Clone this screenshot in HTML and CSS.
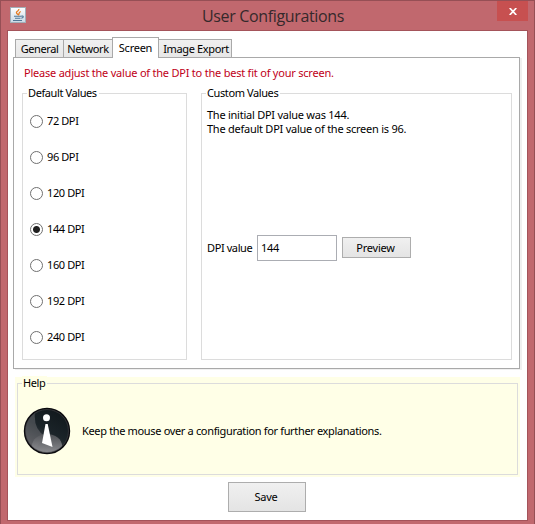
FILE: index.html
```html
<!DOCTYPE html>
<html lang="en">
<head>
<meta charset="utf-8">
<title>User Configurations</title>
<link rel="stylesheet" href="styles.css">
</head>
<body>
<div class="window">
  <header class="titlebar">
    <svg class="app-icon" width="16" height="16" viewBox="0 0 16 16">
      <defs><linearGradient id="tile" x2="0" y2="1"><stop stop-color="#fff"/><stop offset="1" stop-color="#c9d9e5"/></linearGradient></defs>
      <rect x=".5" y=".5" width="15" height="15" fill="url(#tile)" stroke="#a2afb8"/>
      <path d="M8.5 8C5.5 6 6 5 8 3.700Q9 3 8.800 2M8.500 8.200C9.500 7 8 6 10.700 4.500" fill="none" stroke="#e57b20" stroke-width="1.300"/>
      <path d="M4 9.300h7M5 11.300h5.500M3 13.500h9M11 9.200c3-.8 3 1.500.3 2.100" fill="none" stroke="#517897" stroke-width="1.100"/>
    </svg>
    <h1 class="title">User Configurations</h1>
    <button class="close" aria-label="Close"><svg width="8" height="7" viewBox="0 0 8 7"><path d="M.7 0 7.300 7M7.300 0 .7 7" stroke="#fff" stroke-width="1.700"/></svg></button>
  </header>
  <main class="content">
    <nav class="tabs">
      <span class="tab general">General</span><span class="tab network">Network</span><span class="tab active">Screen</span><span class="tab export">Image Export</span>
    </nav>
    <section class="panel">
      <p class="notice">Please adjust the value of the DPI to the best fit of your screen.</p>
      <div class="groups">
        <div class="group defaults">
          <span class="legend">Default Values</span>
          <div class="option"><i class="radio"></i><span>72 DPI</span></div>
          <div class="option"><i class="radio"></i><span>96 DPI</span></div>
          <div class="option"><i class="radio"></i><span>120 DPI</span></div>
          <div class="option"><i class="radio checked"></i><span>144 DPI</span></div>
          <div class="option"><i class="radio"></i><span>160 DPI</span></div>
          <div class="option"><i class="radio"></i><span>192 DPI</span></div>
          <div class="option"><i class="radio"></i><span>240 DPI</span></div>
        </div>
        <div class="group custom">
          <span class="legend">Custom Values</span>
          <p class="info">The initial DPI value was 144.<br>The default DPI value of the screen is 96.</p>
          <div class="field"><span class="field-label">DPI value</span><span class="input">144</span><span class="button preview">Preview</span></div>
        </div>
      </div>
    </section>
    <section class="help">
      <div class="group help-box">
        <span class="legend">Help</span>
        <svg width="48" height="48" viewBox="0 0 48 48">
          <defs>
            <linearGradient id="ball" x1=".8" x2=".25" y1="0" y2="1"><stop stop-color="#10171b"/><stop offset=".5" stop-color="#1b2429"/><stop offset="1" stop-color="#56565a"/></linearGradient>
            <linearGradient id="glow" x2="0" y2="1"><stop stop-color="#55575b"/><stop offset="1" stop-color="#aaaaae"/></linearGradient>
            <clipPath id="disc"><circle cx="24" cy="24" r="21.500"/></clipPath>
          </defs>
          <circle cx="24" cy="24" r="22.300" fill="url(#ball)" stroke="#0b0b0f" stroke-width="1.800"/>
          <g clip-path="url(#disc)">
            <path d="M12 4Q10 22 22 29L10 44 0 34V12Z" fill="#77777c" opacity=".45"/>
            <ellipse cx="24" cy="39" rx="15" ry="12" fill="url(#glow)" opacity=".85"/>
          </g>
          <circle cx="24" cy="24" r="21.500" fill="none" stroke="#4b4b50" stroke-width=".8" opacity=".7"/>
          <circle cx="23.500" cy="10.700" r="3.500" fill="#fff"/>
          <path d="M22.500 17h2.200L29.500 40 19 36Z" fill="#fff"/>
        </svg>
        <span class="help-text">Keep the mouse over a configuration for further explanations.</span>
      </div>
    </section>
    <div class="button save">Save</div>
  </main>
</div>
</body>
</html>
```
FILE: styles.css
```css
* { box-sizing: border-box; }
body {
  margin: 0;
  font: 11px/14px "Noto Sans", "Open Sans", sans-serif;
  letter-spacing: -0.25px;
  color: #000;
}
p, h1 { margin: 0; }
.window {
  width: 535px;
  height: 524px;
  padding: 0 6px;
  background: #c1686e;
  border: 1px solid #964f55;
  border-bottom: 0;
}
.titlebar {
  height: 29px;
  display: flex;
  align-items: flex-start;
}
.app-icon { margin: 6px 0 0 3px; }
.title {
  margin: 4px 0 0 176px;
  width: 150px;
  font: 16px/22px "Open Sans", sans-serif;
  letter-spacing: -0.35px;
  color: #35282b;
  white-space: nowrap;
}
.close {
  width: 31px;
  height: 20px;
  margin-left: auto;
  padding: 0;
  border: 0;
  background: #c75050;
  display: flex;
  align-items: center;
  justify-content: center;
}
.content {
  height: 491px;
  padding: 6px 5px 0;
  background: #fff;
  border: 1px solid #a4535a;
}
.tabs {
  display: flex;
  align-items: flex-end;
  height: 20px;
  padding-left: 2px;
}
.tab {
  height: 18px;
  border: 1px solid #a9a9a9;
  border-bottom: 0;
  background: linear-gradient(#f0f0f0, #e7e7e7);
  line-height: 18px;
  text-align: center;
  white-space: nowrap;
}
.general { width: 48px; border-right: 0; letter-spacing: -0.4px; }
.network { width: 49px; border-right: 0; letter-spacing: -0.4px; }
.active {
  position: relative;
  width: 47px;
  height: 21px;
  margin-bottom: -1px;
  background: #fff;
  line-height: 19px;
}
.export { width: 73px; border-left: 0; padding-left: 2px; letter-spacing: -0.35px; }
.panel {
  width: 507px;
  height: 312px;
  padding: 8px 7px 0 8px;
  border: 1px solid #a9a9a9;
  box-shadow: 2px 1px #f0f0f0;
}
.notice {
  padding-left: 2px;
  letter-spacing: -0.22px;
  color: #c00018;
  white-space: nowrap;
}
.groups {
  display: flex;
  gap: 14px;
  margin-top: 13px;
}
.group {
  position: relative;
  border: 1px solid #dcdcdc;
}
.legend {
  position: absolute;
  left: 4px;
  top: -8px;
  padding: 0 2px 0 1px;
  background: #fff;
  letter-spacing: -0.4px;
  white-space: nowrap;
}
.defaults {
  width: 165px;
  height: 267px;
  padding: 9px 0 0 7px;
}
.option {
  display: flex;
  align-items: center;
  height: 36px;
  gap: 4px;
  letter-spacing: -0.4px;
}
.radio {
  width: 13px;
  height: 13px;
  border: 1px solid #707070;
  border-radius: 50%;
}
.checked {
  background: radial-gradient(circle, #202020 3px, #fff 4px);
}
.custom { width: 311px; height: 267px; padding: 14px 0 0 5px; }
.info { height: 127px; white-space: nowrap; }
.field { display: flex; align-items: flex-start; }
.field-label { width: 50px; padding-top: 6px; letter-spacing: -0.4px; white-space: nowrap; }
.input {
  width: 80px;
  height: 26px;
  padding: 5px 3px;
  border: 1px solid #abadb3;
}
.button {
  border: 1px solid #adadad;
  background: linear-gradient(#f0f0f0, #e4e4e4);
  text-align: center;
}
.preview { width: 69px; height: 21px; margin: 2px 0 0 5px; padding-right: 2px; line-height: 19px; }
.help {
  width: 505px;
  height: 100px;
  margin: 8px 0 0 2px;
  padding: 6px 2px;
  background: #ffffe7;
}
.help-box {
  height: 92px;
  display: flex;
  align-items: center;
  padding: 3px 0 0 5px;
  gap: 11px;
}
.help .legend { background: #ffffe7; }
.help-text { letter-spacing: -0.34px; }
.save {
  width: 78px;
  height: 30px;
  margin: 5px 0 0 215px;
  padding-right: 2px;
  line-height: 28px;
}
```
